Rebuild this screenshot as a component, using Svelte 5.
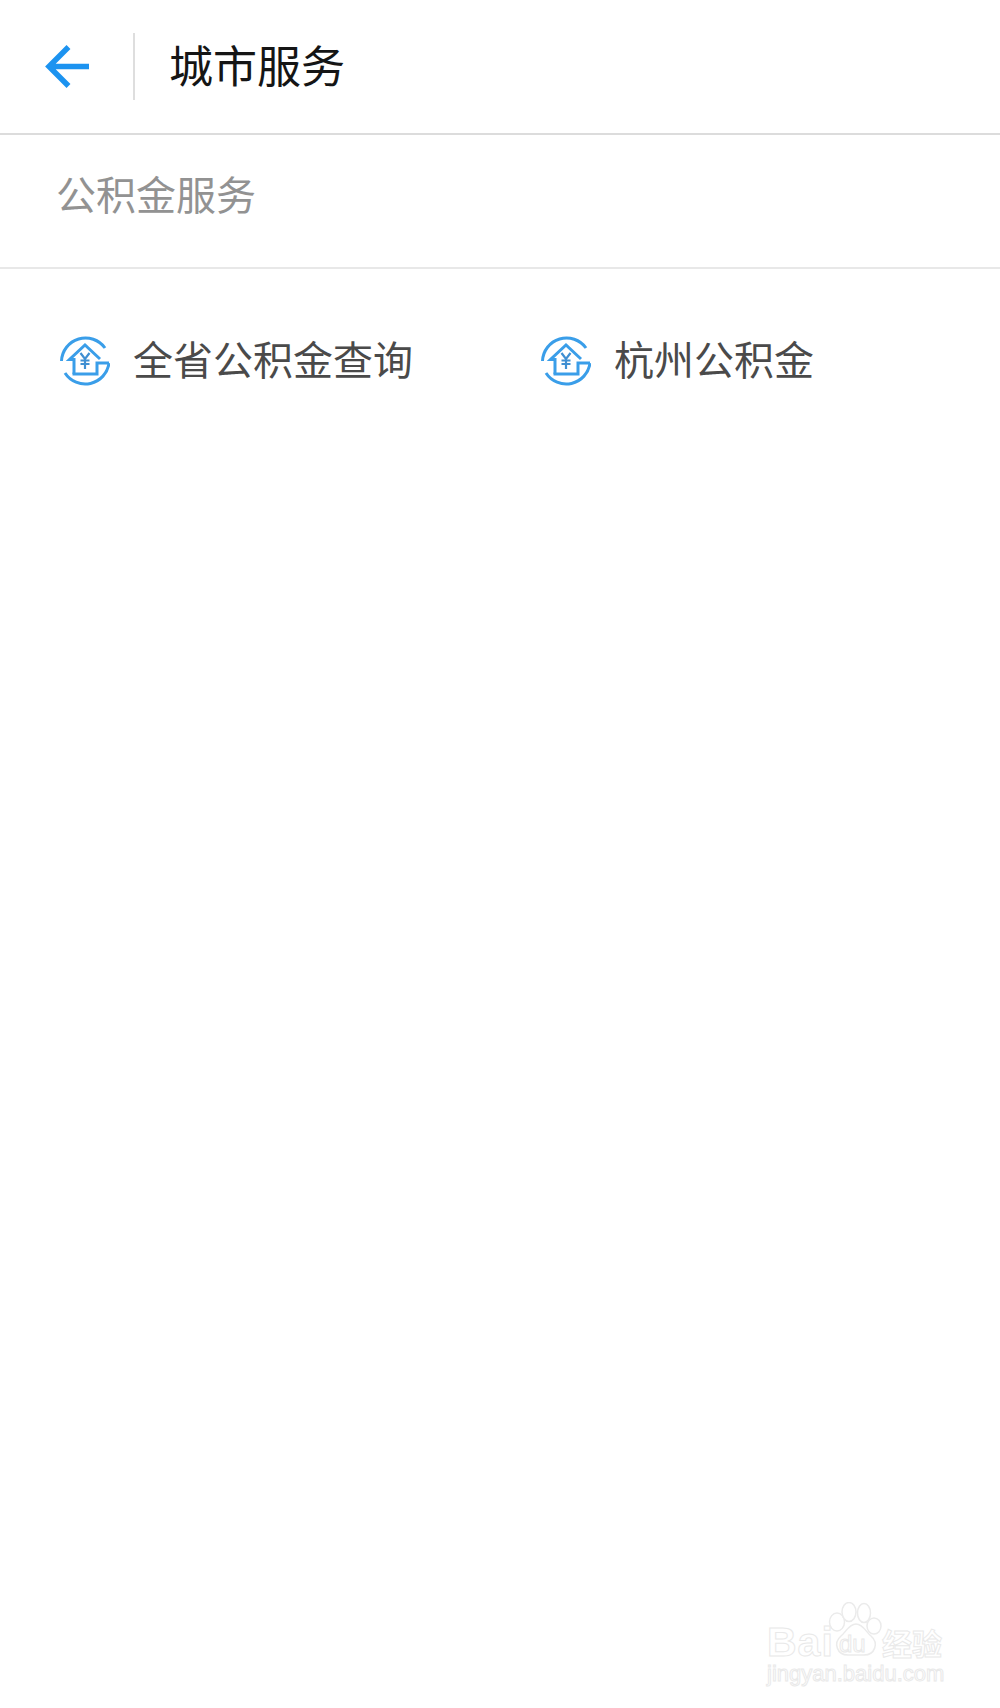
<script>
  const services = ['全省公积金查询', '杭州公积金'];
</script>

<div class="page">
  <header class="topbar">
    <button class="back" aria-label="返回">
      <svg width="46" height="46" viewBox="0 0 46 46">
        <path d="M5 22.500H44M23.500 3L4 22.500L23.500 42" fill="none" stroke="#1c93f0" stroke-width="5.500" />
      </svg>
    </button>
    <span class="sep"></span>
    <h1>城市服务</h1>
  </header>

  <div class="section-title">公积金服务</div>

  <div class="grid">
    {#each services as name}
      <div class="item">
        <svg class="icon" width="50" height="52" viewBox="0 0 50 52" fill="none" stroke="#3a9ee9" stroke-width="3">
          <path d="M1.500 25A24 24 0 0 1 45 12" />
          <path d="M5 37A24 24 0 0 0 49 27" />
          <path d="M14 38V23.500H9.500L25 9L40 23" />
          <path d="M12.500 38H37V27H49" />
          <g stroke="#3f8fd2" stroke-width="2.200">
            <path d="M20.500 17L25 23L29.500 17M25 23V33M20.500 24.500H29.500M20.500 28H29.500" />
          </g>
        </svg>
        <span>{name}</span>
      </div>
    {/each}
  </div>

  <div class="watermark" aria-hidden="true">
    <div class="brand">
      <span class="bai">Bai</span>
      <span class="paw">
        <svg width="56" height="55" viewBox="0 0 56 55" fill="#fff" stroke="#ebebeb" stroke-width="1.500">
          <ellipse cx="9" cy="20" rx="7.500" ry="9" />
          <ellipse cx="21" cy="10" rx="7" ry="9.500" />
          <ellipse cx="36" cy="11" rx="6.500" ry="9.500" />
          <ellipse cx="46" cy="24" rx="7" ry="8" />
          <path d="M28 22C35 22 38 30 43 34C51 41 47 53 36 53C31 53 25 53 20 53C9 53 5 41 13 34C18 30 21 22 28 22Z" />
        </svg>
        <span class="du">du</span>
      </span>
      <span class="jy">经验</span>
    </div>
    <div class="url">jingyan.baidu.com</div>
  </div>
</div>

<style>
  :global(body) {
    margin: 0;
    background: #fff;
  }

  .page {
    position: relative;
    height: 1708px;
    overflow: hidden;
    background: #fff;
    font-family: "Noto Sans CJK SC", "Noto Sans", sans-serif;
  }

  .topbar {
    display: flex;
    align-items: center;
    height: 133px;
    border-bottom: 2px solid #dcdcdc;
    box-sizing: content-box;
  }

  .back {
    display: flex;
    align-items: center;
    width: 133px;
    height: 100%;
    padding: 0 0 0 45px;
    border: 0;
    background: none;
    box-sizing: border-box;
  }

  .sep {
    width: 2px;
    height: 67px;
    background: #dedede;
  }

  h1 {
    margin: 0 0 5px 34px;
    font-size: 44px;
    font-weight: 400;
    color: #151515;
    line-height: 1;
  }

  .section-title {
    display: flex;
    align-items: center;
    box-sizing: border-box;
    height: 134px;
    padding: 0 0 16px 56px;
    border-bottom: 2px solid #e8e8e8;
    font-size: 40px;
    color: #929292;
  }

  .grid {
    display: grid;
    grid-template-columns: 481px 1fr;
    padding: 62px 0 0 60px;
  }

  .item {
    display: flex;
    align-items: center;
    gap: 23px;
    font-size: 40px;
    color: #4a4a4a;
    height: 54px;
  }

  .icon {
    flex: none;
    margin-top: 8px;
  }

  /* baidu stamp sits over the page */
  .watermark {
    position: absolute;
    left: 767px;
    top: 1602px;
    width: 190px;
    font-family: "Liberation Sans", sans-serif;
    color: #fff;
    -webkit-text-stroke: 1px #e9e9e9;
  }

  .brand {
    display: flex;
    align-items: flex-end;
    height: 55px;
  }

  .bai {
    width: 61px;
    flex: none;
    font-size: 41px;
    font-weight: 700;
    line-height: 30px;
    letter-spacing: 1px;
  }

  .paw {
    position: relative;
    width: 54px;
    height: 55px;
    flex: none;
  }

  .paw svg {
    display: block;
  }

  .du {
    position: absolute;
    left: 11px;
    top: 30px;
    font-size: 24px;
    line-height: 24px;
  }

  .jy {
    font-family: "Noto Sans CJK SC", sans-serif;
    font-size: 30px;
    font-weight: 700;
    line-height: 30px;
    white-space: nowrap;
  }

  .url {
    margin-top: 4px;
    font-size: 22px;
    line-height: 26px;
    white-space: nowrap;
  }
</style>
